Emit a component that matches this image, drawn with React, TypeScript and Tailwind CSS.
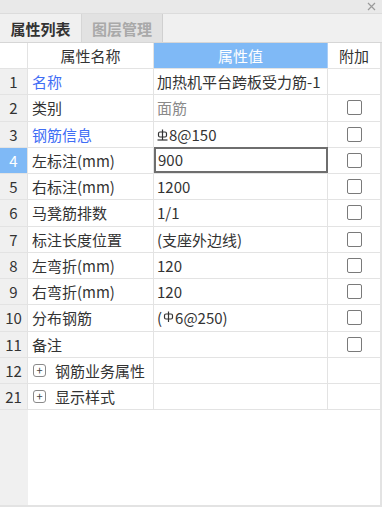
import React from "react";

type Row = {
  no: string;
  name: string;
  nameBlue?: boolean;
  value?: React.ReactNode;
  valueGray?: boolean;
  check?: boolean;
  group?: boolean;
  selected?: boolean;
};

// rebar grade symbols (HRB400 / HPB300)
function Grade3() {
  return (
    <svg width="11" height="13" viewBox="0 0 11 13" className="inline-block mr-[1px] -mt-[3px]">
      <rect x="1.5" y="3" width="8" height="5" rx="1.5" fill="none" stroke="#333" strokeWidth="1.2" />
      <line x1="5.5" y1="0.5" x2="5.5" y2="11" stroke="#333" strokeWidth="1.2" />
      <line x1="0.5" y1="11" x2="10.5" y2="11" stroke="#333" strokeWidth="1.2" />
    </svg>
  );
}

function Grade1() {
  return (
    <svg width="11" height="13" viewBox="0 0 11 13" className="inline-block mx-[1px] -mt-[5px]">
      <rect x="1.5" y="3" width="8" height="5" rx="1.5" fill="none" stroke="#333" strokeWidth="1.2" />
      <line x1="5.5" y1="0.5" x2="5.5" y2="11" stroke="#333" strokeWidth="1.2" />
    </svg>
  );
}

const rows: Row[] = [
  { no: "1", name: "名称", nameBlue: true, value: "加热机平台跨板受力筋-1" },
  { no: "2", name: "类别", value: "面筋", valueGray: true, check: true },
  { no: "3", name: "钢筋信息", nameBlue: true, value: <><Grade3 />8@150</>, check: true },
  { no: "4", name: "左标注(mm)", value: "900", check: true, selected: true },
  { no: "5", name: "右标注(mm)", value: "1200", check: true },
  { no: "6", name: "马凳筋排数", value: "1/1", check: true },
  { no: "7", name: "标注长度位置", value: "(支座外边线)", check: true },
  { no: "8", name: "左弯折(mm)", value: "120", check: true },
  { no: "9", name: "右弯折(mm)", value: "120", check: true },
  { no: "10", name: "分布钢筋", value: <>(<Grade1 />6@250)</>, check: true },
  { no: "11", name: "备注", check: true },
  { no: "12", name: "钢筋业务属性", group: true },
  { no: "21", name: "显示样式", group: true },
];

export default function App() {
  return (
    <div
      className="w-[382px] h-[507px] bg-white flex flex-col text-[15px] text-[#333] overflow-hidden"
      style={{ fontFamily: '"Noto Sans CJK SC", "Noto Sans", sans-serif' }}
    >
      {/* title bar */}
      <div className="h-[14px] shrink-0 bg-[#e9e9e9] border-b border-[#dcdcdc] flex justify-end items-center pr-[6px]">
        <svg width="9" height="9" viewBox="0 0 9 9">
          <path d="M1 1 L8 8 M8 1 L1 8" stroke="#9a9a9a" strokeWidth="1.2" />
        </svg>
      </div>

      {/* tabs */}
      <div className="h-[29px] shrink-0 bg-[#f0f0f0] flex items-stretch border-b border-[#d6d6d6]">
        <div className="w-[82px] flex items-center justify-center font-bold text-[#333] bg-[#f0f0f0] border-r border-[#d6d6d6] leading-none">
          属性列表
        </div>
        <div className="w-[81px] flex items-center justify-center font-bold text-[#a9a9a9] bg-[#e2e2e2] border-r border-[#d0d0d0] leading-none">
          图层管理
        </div>
      </div>

      {/* grid */}
      <div className="flex-1 flex flex-col border-r-2 border-b-2 border-[#e3e3e3] w-[382px]">
        {/* header */}
        <div className="h-[26px] shrink-0 flex border-b border-[#e3e3e3]">
          <div className="w-[28px] shrink-0 bg-white border-r border-[#e3e3e3]" />
          <div className="w-[126px] shrink-0 flex items-center justify-center border-r border-[#e3e3e3] leading-none">
            属性名称
          </div>
          <div className="w-[174px] shrink-0 flex items-center justify-center bg-[#7fb9f6] text-white border-r border-[#a9cdf6] leading-none">
            属性值
          </div>
          <div className="w-[52px] shrink-0 flex items-center justify-center leading-none">附加</div>
        </div>

        {rows.map((r) => (
          <div key={r.no} className="h-[26.25px] shrink-0 flex border-b border-[#e3e3e3]">
            <div
              className={
                r.selected
                  ? "w-[28px] shrink-0 flex items-center justify-center bg-[#7fb9f6] text-white border-r border-[#e3e3e3] leading-none"
                  : "w-[28px] shrink-0 flex items-center justify-center bg-[#f0f0f0] border-r border-[#e3e3e3] leading-none"
              }
            >
              {r.no}
            </div>
            <div className="w-[126px] shrink-0 flex items-center pl-[4px] border-r border-[#e3e3e3] leading-none whitespace-nowrap">
              {r.group ? (
                <>
                  <span className="w-[13px] h-[13px] border border-[#8a8a8a] rounded-[3px] flex items-center justify-center text-[11px] leading-none mr-[9px] ml-[1px] text-[#444]">
                    +
                  </span>
                  {r.name}
                </>
              ) : (
                <span className={r.nameBlue ? "text-[#3f6df5]" : ""}>{r.name}</span>
              )}
            </div>
            <div
              className={
                r.selected
                  ? "w-[174px] shrink-0 flex items-center pl-[2px] border-2 border-[#6e6e6e] -mt-[1px] leading-none whitespace-nowrap"
                  : "w-[174px] shrink-0 flex items-center pl-[3px] border-r border-[#e3e3e3] leading-none whitespace-nowrap"
              }
            >
              <span className={r.valueGray ? "text-[#8a8a8a]" : ""}>{r.value}</span>
            </div>
            <div className="w-[52px] shrink-0 flex items-center justify-center">
              {r.check && <span className="w-[15px] h-[15px] border border-[#7a7a7a] rounded-[2px] bg-white" />}
            </div>
          </div>
        ))}

        {/* empty area */}
        <div className="flex-1 flex">
          <div className="w-[28px] shrink-0 bg-[#f0f0f0]" />
          <div className="flex-1 bg-white" />
        </div>
      </div>
    </div>
  );
}
